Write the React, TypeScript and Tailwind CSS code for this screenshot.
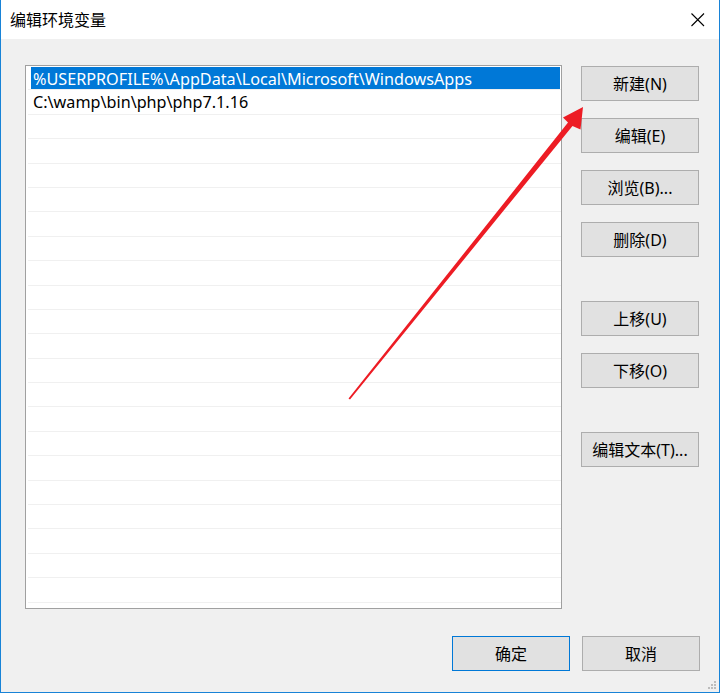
import React from 'react';

const font = { fontFamily: '"Noto Sans", "Noto Sans CJK SC", sans-serif' };

function WinButton({ label, primary = false }: { label: string; primary?: boolean }) {
  return (
    <div
      className={`flex h-[35px] w-[118px] items-center justify-center bg-[#e1e1e1] text-[16px] text-black border ${
        primary ? 'border-[#0078d7]' : 'border-[#adadad]'
      }`}
    >
      {label}
    </div>
  );
}

export default function App() {
  const rows = [
    '%USERPROFILE%\\AppData\\Local\\Microsoft\\WindowsApps',
    'C:\\wamp\\bin\\php\\php7.1.16',
    ...Array(21).fill(''),
  ];

  return (
    <div
      className="relative flex h-[693px] w-[720px] flex-col border-x border-b border-[#1883d7] bg-[#f0f0f0]"
      style={font}
    >
      {/* title bar */}
      <div className="flex h-[39px] items-center justify-between bg-white pl-[9px] pr-[14px]">
        <span className="text-[16px] leading-none text-black">编辑环境变量</span>
        <svg width="15" height="15" viewBox="0 0 15 15" className="mb-[1px]">
          <path d="M1.5 1.5 L14 14 M14 1.5 L1.5 14" stroke="#000" strokeWidth="1.1" fill="none" />
        </svg>
      </div>

      <div className="flex flex-1 flex-col">
        <div className="flex pl-[24px] pt-[26px]">
          {/* list */}
          <div className="h-[544px] w-[537px] overflow-hidden border border-[#a0a0a0] bg-white">
            {rows.map((r, i) => (
              <div key={i} className="ml-[2px] flex h-[24.4px] items-stretch border-b border-[#f0f0f0] pl-[3px] pr-[1px]">
                <div
                  className={`flex flex-1 items-center whitespace-nowrap pl-[2px] pt-[1px] text-[16.2px] ${
                    i === 0 ? 'mt-[1px] bg-[#0078d7] text-white' : 'text-black'
                  }`}
                >
                  {r}
                </div>
              </div>
            ))}
          </div>

          {/* right buttons */}
          <div className="ml-[19px] flex flex-col pt-[1px]">
            <div className="flex flex-col gap-[17px]">
              <WinButton label="新建(N)" />
              <WinButton label="编辑(E)" />
              <WinButton label="浏览(B)..." />
              <WinButton label="删除(D)" />
            </div>
            <div className="mt-[44px] flex flex-col gap-[17px]">
              <WinButton label="上移(U)" />
              <WinButton label="下移(O)" />
            </div>
            <div className="mt-[44px]">
              <WinButton label="编辑文本(T)..." />
            </div>
          </div>
        </div>

        <div className="flex justify-end gap-[12px] pr-[19px] pt-[27px]">
          <WinButton label="确定" primary />
          <WinButton label="取消" />
        </div>
      </div>

      {/* resize grip */}
      <svg className="absolute bottom-[2px] right-[2px]" width="10" height="10" viewBox="0 0 10 10">
        <g fill="#bcbcbc">
          <rect x="7" y="1" width="2" height="2" />
          <rect x="4" y="4" width="2" height="2" />
          <rect x="7" y="4" width="2" height="2" />
          <rect x="1" y="7" width="2" height="2" />
          <rect x="4" y="7" width="2" height="2" />
          <rect x="7" y="7" width="2" height="2" />
        </g>
      </svg>

      {/* red annotation arrow */}
      <svg className="pointer-events-none absolute left-0 top-0" width="720" height="693">
        <polygon
          points="347.5,398.5 567,122.5 562,117.5 582,107 579.5,129.5 571.5,126 349,399.5"
          fill="#ed1c24"
        />
      </svg>
    </div>
  );
}
